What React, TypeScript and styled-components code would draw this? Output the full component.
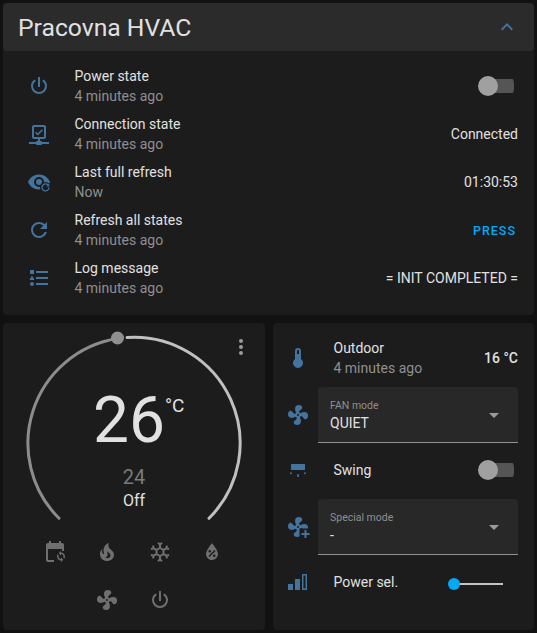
import React from 'react'
import styled, { createGlobalStyle } from 'styled-components'

const mdi = {
  power: 'M16.56,5.44L15.11,6.89C16.84,7.94 18,9.83 18,12A6,6 0 0,1 12,18A6,6 0 0,1 6,12C6,9.83 7.16,7.94 8.88,6.88L7.44,5.44C5.36,6.88 4,9.28 4,12A8,8 0 0,0 12,20A8,8 0 0,0 20,12C20,9.28 18.64,6.88 16.56,5.44M13,3H11V13H13',
  network: 'M15,20A1,1 0 0,0 14,19H13V17H17A2,2 0 0,0 19,15V5A2,2 0 0,0 17,3H7A2,2 0 0,0 5,5V15A2,2 0 0,0 7,17H11V19H10A1,1 0 0,0 9,20H2V22H9A1,1 0 0,0 10,23H14A1,1 0 0,0 15,22H22V20H15M7,15V5H17V15H7M10.75,13.5L8,10.75L9.08,9.66L10.75,11.34L14.92,7.16L16,8.25L10.75,13.5Z',
  eye: 'M12,9A3,3 0 0,0 9,12A3,3 0 0,0 12,15A3,3 0 0,0 15,12A3,3 0 0,0 12,9M12,4.5C7,4.5 2.73,7.61 1,12C2.73,16.39 7,19.5 12,19.5C17,19.5 21.27,16.39 23,12C21.27,7.61 17,4.5 12,4.5M12,17A5,5 0 0,1 7,12A5,5 0 0,1 12,7A5,5 0 0,1 17,12A5,5 0 0,1 12,17Z',
  refresh: 'M17.65,6.35C16.2,4.9 14.21,4 12,4A8,8 0 0,0 4,12A8,8 0 0,0 12,20C15.73,20 18.84,17.45 19.73,14H17.65C16.83,16.33 14.61,18 12,18A6,6 0 0,1 6,12A6,6 0 0,1 12,6C13.66,6 15.14,6.69 16.22,7.78L13,11H20V4L17.65,6.35Z',
  list: 'M5,9.5L7.5,14H2.5L5,9.5M3,4H7V8H3V4M5,20A2,2 0 0,0 7,18A2,2 0 0,0 5,16A2,2 0 0,0 3,18A2,2 0 0,0 5,20M9,5V7H21V5H9M9,19H21V17H9V19M9,13H21V11H9V13Z',
  chevronUp: 'M7.41,15.41L12,10.83L16.59,15.41L18,14L12,8L6,14L7.41,15.41Z',
  dots: 'M12,16A2,2 0 0,1 14,18A2,2 0 0,1 12,20A2,2 0 0,1 10,18A2,2 0 0,1 12,16M12,10A2,2 0 0,1 14,12A2,2 0 0,1 12,14A2,2 0 0,1 10,12A2,2 0 0,1 12,10M12,4A2,2 0 0,1 14,6A2,2 0 0,1 12,8A2,2 0 0,1 10,6A2,2 0 0,1 12,4Z',
  menuDown: 'M7,10L12,15L17,10H7Z',
  thermometer: 'M15 13V5A3 3 0 0 0 9 5V13A5 5 0 1 0 15 13M12 4A1 1 0 0 1 13 5V8H11V5A1 1 0 0 1 12 4Z',
  fan: 'M12,11A1,1 0 0,0 11,12A1,1 0 0,0 12,13A1,1 0 0,0 13,12A1,1 0 0,0 12,11M12.5,2C17,2 17.11,5.57 14.75,6.75C13.76,7.24 13.32,8.29 13.13,9.22C13.61,9.42 14.03,9.73 14.35,10.13C18.05,8.13 22.03,8.92 22.03,12.5C22.03,17 18.46,17.1 17.28,14.73C16.78,13.74 15.72,13.3 14.79,13.11C14.59,13.59 14.28,14 13.88,14.34C15.87,18.03 15.08,22 11.5,22C7,22 6.91,18.42 9.27,17.24C10.25,16.75 10.69,15.71 10.89,14.79C10.4,14.59 9.97,14.27 9.65,13.87C5.96,15.85 2,15.07 2,11.5C2,7 5.56,6.89 6.74,9.26C7.24,10.25 8.29,10.68 9.22,10.87C9.41,10.39 9.73,9.97 10.14,9.65C8.15,5.96 8.94,2 12.5,2Z',
  calendar: 'M11 20H5V9H19V11H21V5C21 3.9 20.1 3 19 3H18V1H16V3H8V1H6V3H5C3.9 3 3 3.9 3 5V20C3 21.1 3.9 22 5 22H11V20Z',
  sync: 'M18,11V12.5C20.21,12.5 22,14.29 22,16.5C22,17.32 21.75,18.08 21.33,18.71L20.24,17.62C20.48,17.2 20.5,16.86 20.5,16.5C20.5,15.12 19.38,14 18,14V15.5L15.75,13.25L18,11M18,22V20.5C15.79,20.5 14,18.71 14,16.5C14,15.68 14.25,14.92 14.67,14.29L15.76,15.38C15.53,15.8 15.5,16.14 15.5,16.5C15.5,17.88 16.62,19 18,19V17.5L20.25,19.75L18,22Z',
  fire: 'M17.66 11.2C17.43 10.9 17.15 10.64 16.89 10.38C16.22 9.78 15.46 9.35 14.82 8.72C13.33 7.26 13 4.85 13.95 3C13 3.23 12.17 3.75 11.46 4.32C8.87 6.4 7.85 10.07 9.07 13.22C9.11 13.32 9.15 13.42 9.15 13.55C9.15 13.77 9 13.97 8.8 14.05C8.57 14.15 8.33 14.09 8.14 13.93C8.08 13.88 8.04 13.83 8 13.76C6.87 12.33 6.69 10.28 7.45 8.64C5.78 10 4.87 12.3 5 14.47C5.06 14.97 5.12 15.47 5.29 15.97C5.43 16.57 5.7 17.17 6 17.7C7.08 19.43 8.95 20.67 10.96 20.92C13.1 21.19 15.39 20.8 17.03 19.32C18.86 17.66 19.5 15 18.56 12.72L18.43 12.46C18.22 12 17.66 11.2 17.66 11.2M14.5 17.5C14.22 17.74 13.76 18 13.4 18.1C12.28 18.5 11.16 17.94 10.5 17.28C11.69 17 12.4 16.12 12.61 15.23C12.78 14.43 12.46 13.77 12.33 13C12.21 12.26 12.23 11.63 12.5 10.94C12.69 11.32 12.89 11.7 13.13 12C13.9 13 15.11 13.44 15.37 14.8C15.41 14.94 15.43 15.08 15.43 15.23C15.46 16.05 15.1 16.95 14.5 17.5H14.5Z',
  snowflake: 'M20.79,13.95L18.46,14.57L16.46,13.44V10.56L18.46,9.43L20.79,10.05L21.31,8.12L19.54,7.65L20,5.88L18.07,5.36L17.45,7.69L15.45,8.82L13,7.38V5.12L14.71,3.41L13.29,2L12,3.29L10.71,2L9.29,3.41L11,5.12V7.38L8.5,8.82L6.5,7.69L5.92,5.36L4,5.88L4.47,7.65L2.7,8.12L3.22,10.05L5.55,9.43L7.55,10.56V13.45L5.55,14.58L3.22,13.96L2.7,15.89L4.47,16.36L4,18.12L5.93,18.64L6.55,16.31L8.55,15.18L11,16.62V18.88L9.29,20.59L10.71,22L12,20.71L13.29,22L14.7,20.59L13,18.88V16.62L15.5,15.17L17.5,16.3L18.12,18.63L20,18.12L19.53,16.35L21.3,15.88L20.79,13.95M9.5,10.56L12,9.11L14.5,10.56V13.44L12,14.89L9.5,13.44V10.56Z',
  waterPercent: 'M12,3.25C12,3.25 6,10 6,14C6,17.32 8.69,20 12,20A6,6 0 0,0 18,14C18,10 12,3.25 12,3.25M14.47,9.97L15.53,11.03L9.53,17.03L8.47,15.97M9.75,10A1.25,1.25 0 0,1 11,11.25A1.25,1.25 0 0,1 9.75,12.5A1.25,1.25 0 0,1 8.5,11.25A1.25,1.25 0 0,1 9.75,10M14.25,14.5A1.25,1.25 0 0,1 15.5,15.75A1.25,1.25 0 0,1 14.25,17A1.25,1.25 0 0,1 13,15.75A1.25,1.25 0 0,1 14.25,14.5Z',
  swing: 'M5 6H19V12H5ZM4 15.2A1 1 0 1 0 6 15.2A1 1 0 1 0 4 15.2ZM11.2 16H12.8V19H11.2ZM18 15.2A1 1 0 1 0 20 15.2A1 1 0 1 0 18 15.2Z',
  signal: 'M2 14H7V20H2ZM9 9H14V20H9ZM16 4H21V20H16ZM17.5 5.5V18.5H19.5V5.5Z',
}

const GlobalStyle = createGlobalStyle`
  html, body {
    margin: 0;
    padding: 0;
    background: #111111;
  }
  body {
    font-family: Roboto, "Liberation Sans", sans-serif;
    color: #e1e1e1;
  }
`

const Page = styled.div`
  width: 534px;
  box-sizing: border-box;
  padding: 3px 0 3px 3px;
  display: flex;
  flex-direction: column;
  gap: 8px;
`

const Card = styled.section`
  background: #1c1c1c;
  border-radius: 4px;
`

const Header = styled.header`
  height: 48px;
  background: #2b2b2b;
  border-radius: 4px;
  display: flex;
  align-items: center;
  justify-content: space-between;
  padding: 0 15px 0 15px;
`

const Title = styled.h1`
  margin: 0;
  font-size: 24.7px;
  font-weight: 400;
  color: #e1e1e1;
`

const StateList = styled.div`
  padding: 11px 16px 13px 24px;
`

const Row = styled.div`
  height: 48px;
  display: flex;
  align-items: center;
`

const Glyph = styled.svg<{ $tone?: string }>`
  width: 24px;
  height: 24px;
  flex: none;
  display: block;
  fill: ${(p) => p.$tone || '#44739e'};
`

const RowText = styled.div`
  flex: 1;
  margin-left: 23.5px;
  font-size: 14px;
  line-height: 20px;
`

const Name = styled.div`
  color: #e1e1e1;
`

const Secondary = styled.div`
  color: #8f8f8f;
`

const Value = styled.div<{ $strong?: boolean }>`
  font-size: 14px;
  font-weight: ${(p) => (p.$strong ? 500 : 400)};
  color: #e1e1e1;
`

const PressButton = styled.div`
  font-size: 12.5px;
  font-weight: 500;
  letter-spacing: 1px;
  color: #03a9f4;
  margin-right: 2px;
`

const SwitchBody = styled.div`
  width: 36px;
  height: 20px;
  margin-right: 4px;
  display: flex;
  align-items: center;
  background: linear-gradient(#555555, #555555) right center / 30px 14px no-repeat;
  border-radius: 7px;
`

const SwitchThumb = styled.div`
  width: 20px;
  height: 20px;
  border-radius: 50%;
  background: #a0a0a0;
`

const Columns = styled.div`
  display: grid;
  grid-template-columns: 262px 1fr;
  gap: 8px;
`

const ThermostatCard = styled(Card)`
  position: relative;
  height: 307px;
`

const MenuDots = styled.div`
  position: absolute;
  top: 12px;
  right: 12px;
`

const Dial = styled.div`
  display: grid;
  height: 205px;
`

const DialArt = styled.svg`
  grid-area: 1 / 1;
  width: 262px;
  height: 205px;
`

const Readout = styled.div`
  grid-area: 1 / 1;
  padding-top: 65px;
  display: flex;
  flex-direction: column;
  align-items: center;
`

const TempLine = styled.div`
  position: relative;
  margin-right: 10px;
`

const Temp = styled.div`
  font-size: 64px;
  line-height: 66px;
  font-weight: 400;
  color: #e1e1e1;
`

const Unit = styled.div`
  position: absolute;
  left: 100%;
  top: 6px;
  font-size: 19px;
  line-height: 24px;
  color: #e1e1e1;
`

const Target = styled.div`
  font-size: 20px;
  line-height: 24px;
  margin-top: 11px;
  color: #7a7a7a;
`

const ModeName = styled.div`
  font-size: 16px;
  line-height: 22px;
  margin-top: 1px;
  color: #e1e1e1;
`

const Modes = styled.div`
  width: 210px;
  margin-left: 25.5px;
  display: flex;
  flex-wrap: wrap;
  justify-content: center;
`

const Mode = styled.div`
  width: 52.5px;
  height: 48px;
  display: flex;
  align-items: center;
  justify-content: center;
`

const ControlsCard = styled(Card)`
  padding: 15px 16px 28px 13px;
  display: flex;
  flex-direction: column;
  gap: 8px;
`

const ControlRow = styled.div`
  height: 40px;
  display: flex;
  align-items: center;
`

const ControlText = styled.div`
  flex: 1;
  margin-left: 23.5px;
  font-size: 14px;
  line-height: 20px;
`

const SelectRow = styled.div`
  display: flex;
  align-items: center;
  gap: 8px;
  margin: 1px 0 -1px;
`

const SelectBox = styled.div`
  flex: 1;
  height: 56px;
  box-sizing: border-box;
  background: #282828;
  border-radius: 4px 4px 0 0;
  border-bottom: 1px solid #8f8f8f;
  padding: 0 12px;
  display: flex;
  align-items: center;
`

const SelectText = styled.div`
  flex: 1;
  padding-top: 2px;
`

const SelectLabel = styled.div`
  font-size: 10.5px;
  line-height: 14px;
  color: #8f8f8f;
`

const SelectValue = styled.div`
  font-size: 14px;
  line-height: 20px;
  color: #e1e1e1;
`

const SliderTrack = styled.div`
  width: 49px;
  height: 2px;
  background: #c4c4c4;
  display: flex;
  align-items: center;
  margin: 3px 15px 0 0;
`

const SliderThumb = styled.div`
  width: 12px;
  height: 12px;
  border-radius: 50%;
  background: #03a9f4;
  margin-left: -6px;
`

const Icon = ({ d, tone }: { d: string; tone?: string }) => (
  <Glyph viewBox="0 0 24 24" $tone={tone}>
    <path d={d} />
  </Glyph>
)

const EyeRefreshIcon = () => (
  <Glyph viewBox="0 0 24 24">
    <path d={mdi.eye} />
    <circle cx="18.5" cy="17.5" r="5.5" fill="#1c1c1c" />
    <path d="M21.1 15.1A3.5 3.5 0 1 0 22 17.5" fill="none" stroke="#44739e" strokeWidth="1.3" />
    <path d="M22.2 13.6V16.6H19.2Z" />
  </Glyph>
)

const FanPlusIcon = () => (
  <Glyph viewBox="0 0 24 24">
    <path d={mdi.fan} />
    <path d="M13.5 13.5H25V25H13.5Z" fill="#1c1c1c" />
    <path d="M18.5 15H20.5V18H23.5V20H20.5V23H18.5V20H15.5V18H18.5Z" />
  </Glyph>
)

const CalendarSyncIcon = ({ tone }: { tone: string }) => (
  <Glyph viewBox="0 0 24 24" $tone={tone}>
    <path d={mdi.calendar} />
    <path d={mdi.sync} />
  </Glyph>
)

const Switch = () => (
  <SwitchBody>
    <SwitchThumb />
  </SwitchBody>
)

const Select = ({ label, value }: { label: string; value: string }) => (
  <SelectBox>
    <SelectText>
      <SelectLabel>{label}</SelectLabel>
      <SelectValue>{value}</SelectValue>
    </SelectText>
    <Icon d={mdi.menuDown} tone="#9b9b9b" />
  </SelectBox>
)

const states = [
  { icon: <Icon d={mdi.power} />, name: 'Power state', time: '4 minutes ago', end: <Switch /> },
  { icon: <Icon d={mdi.network} />, name: 'Connection state', time: '4 minutes ago', end: <Value>Connected</Value> },
  { icon: <EyeRefreshIcon />, name: 'Last full refresh', time: 'Now', end: <Value>01:30:53</Value> },
  { icon: <Icon d={mdi.refresh} />, name: 'Refresh all states', time: '4 minutes ago', end: <PressButton>PRESS</PressButton> },
  { icon: <Icon d={mdi.list} />, name: 'Log message', time: '4 minutes ago', end: <Value>= INIT COMPLETED =</Value> },
]

const modeTone = '#6f6f6f'

const App: React.FC = () => {
  return (
    <Page>
      <GlobalStyle />
      <Card>
        <Header>
          <Title>Pracovna HVAC</Title>
          <Icon d={mdi.chevronUp} />
        </Header>
        <StateList>
          {states.map((s) => (
            <Row key={s.name}>
              {s.icon}
              <RowText>
                <Name>{s.name}</Name>
                <Secondary>{s.time}</Secondary>
              </RowText>
              {s.end}
            </Row>
          ))}
        </StateList>
      </Card>
      <Columns>
        <ThermostatCard>
          <MenuDots>
            <Icon d={mdi.dots} tone="#9b9b9b" />
          </MenuDots>
          <Dial>
            <DialArt viewBox="0 0 262 205">
              <path d="M56 195.3A106 106 0 0 1 114.5 15.6" fill="none" stroke="#8c8c8c" strokeWidth="3" strokeLinecap="round" />
              <path d="M124 14.5A106 106 0 0 1 206 195.3" fill="none" stroke="#c0c0c0" strokeWidth="3" strokeLinecap="round" />
              <circle cx="114.5" cy="15" r="6.5" fill="#8f8f8f" />
            </DialArt>
            <Readout>
              <TempLine>
                <Temp>26</Temp>
                <Unit>°C</Unit>
              </TempLine>
              <Target>24</Target>
              <ModeName>Off</ModeName>
            </Readout>
          </Dial>
          <Modes>
            <Mode><CalendarSyncIcon tone={modeTone} /></Mode>
            <Mode><Icon d={mdi.fire} tone={modeTone} /></Mode>
            <Mode><Icon d={mdi.snowflake} tone={modeTone} /></Mode>
            <Mode><Icon d={mdi.waterPercent} tone={modeTone} /></Mode>
            <Mode><Icon d={mdi.fan} tone={modeTone} /></Mode>
            <Mode><Icon d={mdi.power} tone={modeTone} /></Mode>
          </Modes>
        </ThermostatCard>
        <ControlsCard>
          <ControlRow>
            <Icon d={mdi.thermometer} />
            <ControlText>
              <Name>Outdoor</Name>
              <Secondary>4 minutes ago</Secondary>
            </ControlText>
            <Value $strong>16 °C</Value>
          </ControlRow>
          <SelectRow>
            <Icon d={mdi.fan} />
            <Select label="FAN mode" value="QUIET" />
          </SelectRow>
          <ControlRow>
            <Icon d={mdi.swing} />
            <ControlText>
              <Name>Swing</Name>
            </ControlText>
            <Switch />
          </ControlRow>
          <SelectRow>
            <FanPlusIcon />
            <Select label="Special mode" value="-" />
          </SelectRow>
          <ControlRow>
            <Icon d={mdi.signal} />
            <ControlText>
              <Name>Power sel.</Name>
            </ControlText>
            <SliderTrack>
              <SliderThumb />
            </SliderTrack>
          </ControlRow>
        </ControlsCard>
      </Columns>
    </Page>
  )
}

export default App
